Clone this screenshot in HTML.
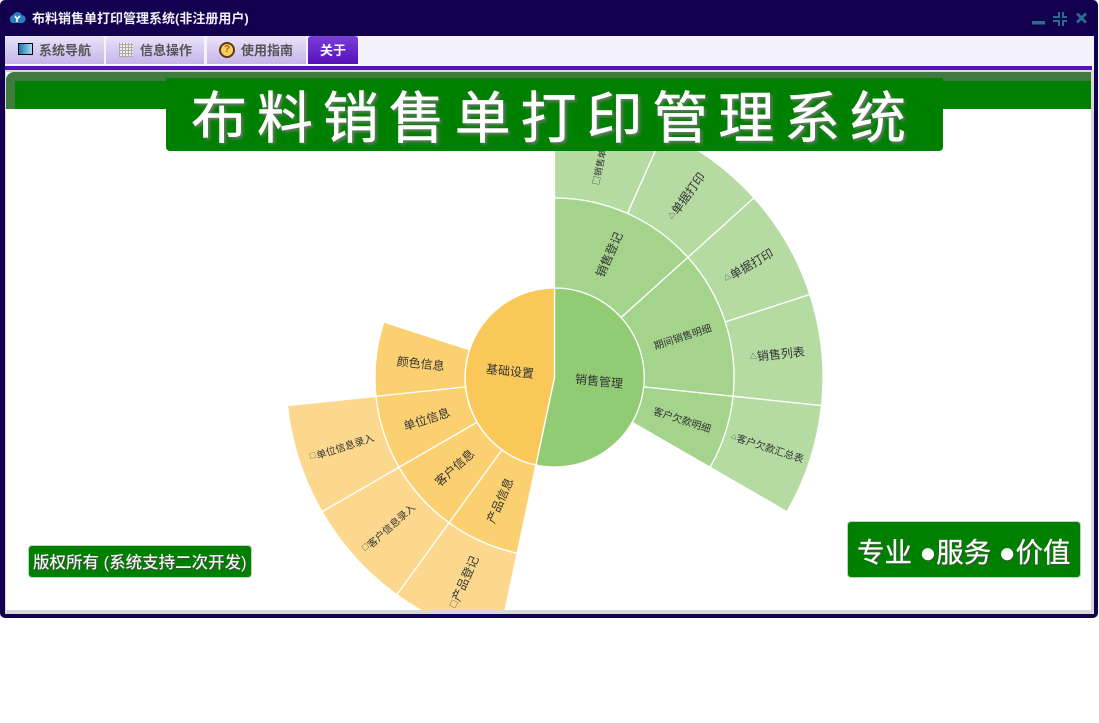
<!DOCTYPE html>
<html><head><meta charset="utf-8">
<style>
html,body{margin:0;padding:0;background:#fff;width:1099px;height:723px;overflow:hidden}
*{box-sizing:border-box}
body{font-family:"Liberation Sans","Noto Sans CJK SC",sans-serif;position:relative}
.a{position:absolute}
.tab{position:absolute;top:36px;height:29px;background:linear-gradient(#e9e3f9,#c4b5ea);border-bottom:1px solid #fff;border-radius:3px 3px 0 0;font-size:13px;font-weight:bold;color:#555;line-height:30px;white-space:nowrap}
.tab span{position:absolute;top:0}
svg text{font-family:"Noto Sans CJK SC","Liberation Sans",sans-serif;fill:#333;text-anchor:middle;dominant-baseline:central}
</style></head><body>
<div class="a" style="left:0;top:0;width:1098px;height:618px;background:#13004f;border-radius:5px"></div>
<svg class="a" style="left:9px;top:10px" width="18" height="16" viewBox="0 0 18 16"><path d="M1 10a4 4 0 0 1 3-5 5 5 0 0 1 9 0 4 4 0 0 1 3 6 4 4 0 0 1-4 2H4a3 3 0 0 1-3-3z" fill="#2a7fc0"/><path d="M6 6l2 3 3-3M8 9v3" stroke="#fff" stroke-width="1.6" fill="none"/></svg>
<div class="a" style="left:32px;top:10px;font-size:13px;font-weight:bold;color:#f0f0f8;line-height:18px;white-space:nowrap">布料销售单打印管理系统(非注册用户)</div>
<svg class="a" style="left:1030px;top:10px" width="60" height="18" viewBox="0 0 60 18" fill="#2b6d8c"><rect x="2" y="11" width="13" height="3.500"/><path d="M23 6h5V2h2v6h-7zM32 2h2v4h3v2h-5zM23 10h7v6h-2v-4h-5zM32 10h5v2h-3v4h-2z"/><path d="M48 2.500l3.500 3.500 3.500-3.500 2 2-3.500 3.500 3.500 3.500-2 2-3.500-3.500-3.500 3.500-2-2 3.500-3.500-3.500-3.500z"/></svg>

<div class="a" style="left:5px;top:36px;width:1089px;height:578px;background:#f4f2fc"></div>
<div class="tab" style="left:5px;width:99px"><span style="left:34px">系统导航</span></div>
<div class="tab" style="left:106px;width:98px"><span style="left:34px">信息操作</span></div>
<div class="tab" style="left:207px;width:99px"><span style="left:34px">使用指南</span></div>
<div class="tab" style="left:308px;width:50px;background:linear-gradient(#7b3fd8,#5510b8);color:#fff"><span style="left:12px">关于</span></div>
<div class="a" style="left:18px;top:43px;width:15px;height:12px;border:1px solid #000;background:linear-gradient(90deg,#1a78b0,#a8d8f0)"></div>
<div class="a" style="left:119px;top:43px;width:14px;height:14px;background:repeating-linear-gradient(0deg,#aaa 0 1px,transparent 1px 3px),repeating-linear-gradient(90deg,#aaa 0 1px,#eeeee6 1px 3px)"></div>
<div class="a" style="left:219px;top:42px;width:16px;height:16px;border-radius:50%;background:#f8d060;border:2px solid #5a3a10;color:#b06010;font-size:10px;font-weight:bold;text-align:center;line-height:12px">?</div>
<div class="a" style="left:5px;top:66px;width:1087px;height:4px;background:#5510c0"></div>
<div class="a" style="left:5px;top:70px;width:1089px;height:544px;background:#d8d8d8"></div>
<div class="a" style="left:6px;top:72px;width:1085px;height:538px;background:#fff"></div>
<div class="a" style="left:6px;top:72px;width:1085px;height:37px;background:#3f7a3f;border-radius:8px 0 0 0"></div>
<div class="a" style="left:15px;top:81px;width:1076px;height:28px;background:#008000"></div>

<svg class="a" style="left:0;top:0" width="1099" height="723" viewBox="0 0 1099 723">
<defs><clipPath id="c"><rect x="6" y="109" width="1085" height="501"/></clipPath></defs>
<g clip-path="url(#c)" stroke="#fff" stroke-width="1.300">
<path fill="#b5dba3" d="M554.500 198V109A268.500 268.500 0 0 1 663.700 132.200L627.500 213.500A179.500 179.500 0 0 0 554.500 198Z"/>
<path fill="#b5dba3" d="M627.500 213.500L663.700 132.200A268.500 268.500 0 0 1 754 197.800L687.900 257.400A179.500 179.500 0 0 0 627.500 213.500Z"/>
<path fill="#b5dba3" d="M687.900 257.400L754 197.800A268.500 268.500 0 0 1 809.900 294.500L725.200 322A179.500 179.500 0 0 0 687.900 257.400Z"/>
<path fill="#b5dba3" d="M725.200 322L809.900 294.500A268.500 268.500 0 0 1 821.500 405.600L733 396.300A179.500 179.500 0 0 0 725.200 322Z"/>
<path fill="#b5dba3" d="M733 396.300L821.500 405.600A268.500 268.500 0 0 1 787 511.750L709.950 467.250A179.500 179.500 0 0 0 733 396.300Z"/>
<path fill="#a4d48c" d="M554.500 288V198A179.500 179.500 0 0 1 687.900 257.400L621 317.600A89.500 89.500 0 0 0 554.500 288Z"/>
<path fill="#a4d48c" d="M621 317.600L687.900 257.400A179.500 179.500 0 0 1 733 396.300L643.500 386.900A89.500 89.500 0 0 0 621 317.600Z"/>
<path fill="#a4d48c" d="M643.500 386.900L733 396.300A179.500 179.500 0 0 1 709.950 467.250L632 422.250A89.500 89.500 0 0 0 643.500 386.900Z"/>
<path fill="#91cc75" d="M554.500 377.500V288A89.500 89.500 0 1 1 535.900 465Z"/>
<path fill="#fbd88e" d="M517.200 553.100L498.700 640.100A268.500 268.500 0 0 1 396.700 594.700L449 522.700A179.500 179.500 0 0 0 517.200 553.100Z"/>
<path fill="#fbd88e" d="M449 522.700L396.700 594.700A268.500 268.500 0 0 1 322 511.750L399.050 467.250A179.500 179.500 0 0 0 449 522.700Z"/>
<path fill="#fbd88e" d="M399.050 467.250L322 511.750A268.500 268.500 0 0 1 287.500 405.600L376 396.300A179.500 179.500 0 0 0 399.050 467.250Z"/>
<path fill="#fbd070" d="M535.900 465L517.200 553.100A179.500 179.500 0 0 1 449 522.700L501.900 449.900A89.500 89.500 0 0 0 535.900 465Z"/>
<path fill="#fbd070" d="M501.900 449.900L449 522.700A179.500 179.500 0 0 1 399.050 467.250L477 422.250A89.500 89.500 0 0 0 501.900 449.900Z"/>
<path fill="#fbd070" d="M477 422.250L399.050 467.250A179.500 179.500 0 0 1 376 396.300L465.500 386.900A89.500 89.500 0 0 0 477 422.250Z"/>
<path fill="#fbd070" d="M465.500 386.900L376 396.300A179.500 179.500 0 0 1 383.800 322L469.400 349.800A89.500 89.500 0 0 0 465.500 386.900Z"/>
<path fill="#fac858" d="M554.500 377.500L535.900 465A89.500 89.500 0 0 1 554.500 288Z"/>
</g>
<g clip-path="url(#c)" font-size="12">
<text transform="translate(599 381) rotate(6)">销售管理</text>
<text transform="translate(510 371) rotate(6)">基础设置</text>
<text transform="translate(609 254.500) rotate(-66)">销售登记</text>
<text transform="translate(682.400 335.900) rotate(-18)" font-size="10">期间销售明细</text>
<text transform="translate(682.400 419) rotate(18)" font-size="10">客户欠款明细</text>
<text transform="translate(601 158.400) rotate(-78)" font-size="9">□销售单录入</text>
<text transform="translate(686 196) rotate(-54)"><tspan font-size="7">△</tspan>单据打印</text>
<text transform="translate(748.500 265.500) rotate(-30)"><tspan font-size="7">△</tspan>单据打印</text>
<text transform="translate(777.300 354.100) rotate(-6)"><tspan font-size="7">△</tspan>销售列表</text>
<text transform="translate(767.500 446.700) rotate(18)" font-size="10"><tspan font-size="6">△</tspan>客户欠款汇总表</text>
<text transform="translate(499.800 500.400) rotate(-66)">产品信息</text>
<text transform="translate(454.500 467.500) rotate(-42)">客户信息</text>
<text transform="translate(426.600 419.100) rotate(-18)">单位信息</text>
<text transform="translate(420.700 363.400) rotate(6)">颜色信息</text>
<text transform="translate(463.400 582) rotate(-66)"><tspan font-size="8">□</tspan>产品登记</text>
<text transform="translate(388 527.400) rotate(-42)" font-size="10"><tspan font-size="7">□</tspan>客户信息录入</text>
<text transform="translate(341.500 446.700) rotate(-18)" font-size="10"><tspan font-size="7">□</tspan>单位信息录入</text>
</g>
</svg>

<div class="a" style="left:166px;top:78px;width:777px;height:73px;background:#008000;border-radius:0 0 4px 4px;color:#fff;font-size:56px;font-weight:400;line-height:82px;letter-spacing:9.900px;white-space:nowrap;padding-left:25px;-webkit-text-stroke:.5px #fff;text-shadow:2px 2px 3px #777">布料销售单打印管理系统</div>
<div class="a" style="left:28px;top:545px;width:224px;height:33px;background:#008000;border:1px solid #b8d8b8;border-radius:4px;color:#f4f4f4;font-size:16.500px;font-weight:500;line-height:35px;white-space:nowrap;padding-left:4px;text-shadow:1px 1px 1px #444">版权所有 (系统支持二次开发)</div>
<div class="a" style="left:847px;top:521px;width:234px;height:57px;background:#008000;border:1px solid #b8d8b8;border-radius:4px;color:#fff;font-size:27.500px;font-weight:400;line-height:62px;white-space:nowrap;padding-left:9px;-webkit-text-stroke:.3px #fff;text-shadow:1px 1px 1px #444">专业 ●服务 ●价值</div>
</body></html>
